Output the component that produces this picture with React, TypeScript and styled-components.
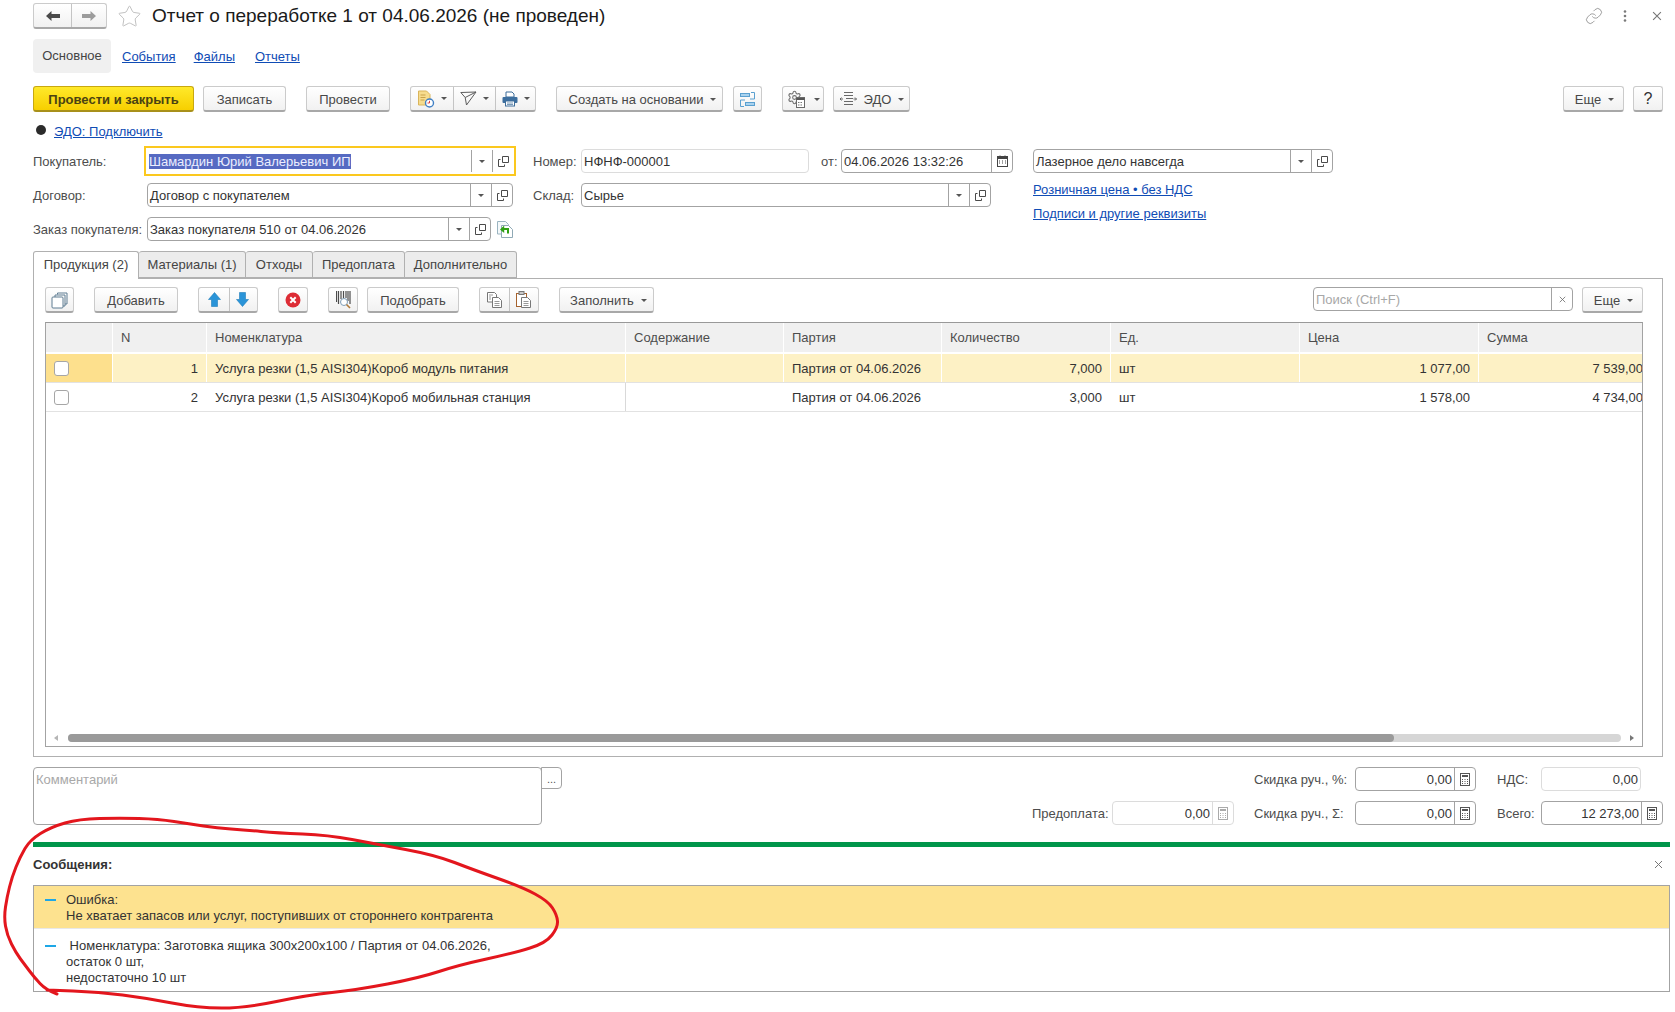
import React from "react";
import styled, { createGlobalStyle } from "styled-components";
import { Link as LinkIcon, Settings, Star as StarIcon } from "lucide-react";

const Global = createGlobalStyle`
  html, body { margin: 0; padding: 0; background: #fff; overflow: hidden; }
  body { font-family: "Liberation Sans", Arial, sans-serif; font-size: 13px; color: #333; }
`;

const Page = styled.div`
  position: relative;
  width: 1675px;
  height: 1012px;
  box-sizing: border-box;
  padding: 4px 5px 0 33px;
  overflow: hidden;
`;

const Content = styled.div`
  width: 1630px;
`;

const TitleBar = styled.header`
  display: flex;
  align-items: center;
  height: 24px;
`;

const Title = styled.h1`
  margin: 0 0 0 10px;
  font-size: 19px;
  font-weight: 400;
  color: #1a1a1a;
  white-space: nowrap;
`;

const WindowIcons = styled.div`
  margin-left: auto;
  display: flex;
  align-items: center;
  gap: 20px;
  color: #8a8a8a;
  transform: translateX(-1px);
`;

const CloseSlot = styled.span`
  margin-left: 5px;
  display: inline-flex;
`;

const Tabs = styled.nav`
  display: flex;
  align-items: center;
  height: 34px;
  margin-top: 11px;
`;

const ActiveSection = styled.div`
  width: 78px;
  height: 34px;
  line-height: 34px;
  text-align: center;
  background: #f0f0f0;
  border-radius: 4px;
  color: #444;
  margin-right: 11px;
`;

const A = styled.a<{ $ml?: number }>`
  color: #0f4cb5;
  text-decoration: underline;
  margin-left: ${(p) => p.$ml ?? 0}px;
  white-space: nowrap;
`;

const Toolbar = styled.div<{ $mt?: number }>`
  display: flex;
  align-items: flex-start;
  height: 26px;
  margin-top: ${(p) => p.$mt ?? 0}px;
`;

const Btn = styled.div<{ $w: number; $ml?: number; $primary?: boolean; $shift?: number }>`
  box-sizing: border-box;
  flex: none;
  display: flex;
  align-items: center;
  justify-content: center;
  gap: 7px;
  width: ${(p) => p.$w}px;
  height: 26px;
  padding: 1px 0 0 ${(p) => p.$shift ?? 0}px;
  margin-left: ${(p) => p.$ml ?? 0}px;
  border: 1px solid ${(p) => (p.$primary ? "#c8a810" : "#cbcbcb")};
  border-bottom: 2px solid ${(p) => (p.$primary ? "#a8901a" : "#a8a8a8")};
  border-radius: 3px;
  background: ${(p) =>
    p.$primary ? "linear-gradient(#ffe92a, #f7cf00)" : "linear-gradient(#ffffff, #f1f1f1)"};
  color: ${(p) => (p.$primary ? "#4a4212" : "#484848")};
  font-weight: ${(p) => (p.$primary ? 700 : 400)};
  white-space: nowrap;
`;

const HelpBtn = styled(Btn)`
  font-size: 16px;
  color: #333;
`;

const BtnGroup = styled(Btn)`
  gap: 0;
  padding: 0;
  align-items: stretch;
  justify-content: flex-start;
`;

const Segment = styled.div<{ $w: number }>`
  box-sizing: border-box;
  display: flex;
  align-items: center;
  justify-content: center;
  gap: 6px;
  width: ${(p) => p.$w}px;
  & + & {
    border-left: 1px solid #c4c4c4;
  }
`;

const Caret = styled.span`
  flex: none;
  width: 0;
  height: 0;
  border-left: 3px solid transparent;
  border-right: 3px solid transparent;
  border-top: 3px solid #555;
`;

const Push = styled.div`
  margin-left: auto;
`;

const EdoRow = styled.div`
  display: flex;
  align-items: center;
  height: 20px;
  margin-top: 9px;
  padding-left: 3px;
`;

const Bullet = styled.span`
  width: 10px;
  height: 10px;
  border-radius: 50%;
  background: #2b2b2b;
  margin-right: 8px;
  transform: translateY(-1px);
`;

const Form = styled.section`
  display: grid;
  grid-template-columns: 500px 500px auto;
  margin-top: 8px;
`;

const FormCol = styled.div`
  display: flex;
  flex-direction: column;
  gap: 10px;
`;

const FormRow = styled.div`
  display: flex;
  align-items: center;
  height: 24px;
`;

const Label = styled.span<{ $w?: number; $ml?: number }>`
  flex: none;
  box-sizing: border-box;
  width: ${(p) => (p.$w ? `${p.$w}px` : "auto")};
  margin-left: ${(p) => p.$ml ?? 0}px;
  color: #4d4d4d;
  white-space: nowrap;
`;

const Field = styled.div<{ $w: number; $h?: number; $muted?: boolean; $focus?: boolean }>`
  box-sizing: border-box;
  flex: none;
  display: flex;
  align-items: stretch;
  width: ${(p) => p.$w + (p.$focus ? 6 : 0)}px;
  height: ${(p) => (p.$h ?? 24) + (p.$focus ? 6 : 0)}px;
  margin: ${(p) => (p.$focus ? "-3px" : "0")};
  padding: ${(p) => (p.$focus ? "2px 1px" : "0")};
  border: ${(p) => (p.$focus ? "2px solid #fbc81e" : `1px solid ${p.$muted ? "#dcdcdc" : "#a3a3a3"}`)};
  border-radius: ${(p) => (p.$focus ? 0 : 4)}px;
  background: #fff;
`;

const Value = styled.div<{ $right?: boolean; $placeholder?: boolean }>`
  flex: 1;
  min-width: 0;
  padding: 0 ${(p) => (p.$right ? "2px" : "0")} 0 ${(p) => (p.$right ? "0" : "2px")};
  line-height: 23px;
  text-align: ${(p) => (p.$right ? "right" : "left")};
  color: ${(p) => (p.$placeholder ? "#a8a8a8" : "#333")};
  white-space: nowrap;
  overflow: hidden;
`;

const Selected = styled.span`
  background: #566ac2;
  color: #eceeff;
  display: inline-block;
  line-height: 15px;
`;

const Addon = styled.div<{ $muted?: boolean }>`
  flex: none;
  box-sizing: border-box;
  width: 21px;
  display: flex;
  align-items: center;
  justify-content: center;
  border-left: 1px solid ${(p) => (p.$muted ? "#dcdcdc" : "#a3a3a3")};
  color: #555;
  font-size: 12px;
`;

const GreenDocWrap = styled.span`
  margin-left: 6px;
  display: inline-flex;
`;

const LinkCol = styled.div`
  display: flex;
  flex-direction: column;
  gap: 8px;
  margin-top: -1px;
  line-height: 16px;
`;

const TabStrip = styled.div`
  display: flex;
  height: 27px;
  margin-top: 10px;
`;

const Tab = styled.div<{ $w: number; $active?: boolean }>`
  box-sizing: border-box;
  width: ${(p) => p.$w}px;
  height: ${(p) => (p.$active ? 28 : 27)}px;
  line-height: 26px;
  text-align: center;
  border: 1px solid #b0b0b0;
  border-bottom: ${(p) => (p.$active ? "none" : "1px solid #b0b0b0")};
  border-left-width: ${(p) => (p.$active ? 1 : 0)}px;
  border-radius: 3px 3px 0 0;
  background: ${(p) => (p.$active ? "#fff" : "#ececec")};
  color: #444;
  position: relative;
  z-index: ${(p) => (p.$active ? 1 : 0)};
`;

const Panel = styled.section`
  box-sizing: border-box;
  height: 479px;
  padding: 8px 19px 9px 11px;
  border: 1px solid #b0b0b0;
`;

const Table = styled.div`
  box-sizing: border-box;
  display: flex;
  flex-direction: column;
  height: 425px;
  margin-top: 9px;
  border: 1px solid #a3a3a3;
  border-top-color: #999;
  overflow: hidden;
`;

const Row = styled.div<{ $head?: boolean }>`
  flex: none;
  display: grid;
  grid-template-columns: 67px 94px 419px 158px 158px 169px 189px 179px 173px;
  height: ${(p) => (p.$head ? 31 : 29)}px;
  box-sizing: border-box;
  border-bottom: ${(p) => (p.$head ? "2px solid #fff" : "1px solid #e2e2e2")};
`;

const Cell = styled.div<{ $tone?: "head" | "current" | "marker"; $right?: boolean; $line?: string }>`
  box-sizing: border-box;
  display: flex;
  align-items: center;
  justify-content: ${(p) => (p.$right ? "flex-end" : "flex-start")};
  padding: 0 8px;
  background: ${(p) =>
    p.$tone === "head"
      ? "#f0f0f0"
      : p.$tone === "current"
        ? "#fdf1c5"
        : p.$tone === "marker"
          ? "#fde08d"
          : "transparent"};
  color: ${(p) => (p.$tone === "head" ? "#4d4d4d" : "#333")};
  border-right: 1px solid ${(p) => p.$line ?? "transparent"};
  white-space: nowrap;
`;

const Check = styled.span`
  box-sizing: border-box;
  width: 15px;
  height: 15px;
  background: #fff;
  border: 1px solid #a6a6a6;
  border-radius: 3px;
`;

const TableFill = styled.div`
  flex: 1;
`;

const Scroll = styled.div`
  flex: none;
  display: flex;
  align-items: center;
  height: 11px;
  margin-bottom: 3px;
  padding: 0 8px;
`;

const ScrollArrow = styled.span<{ $right?: boolean }>`
  flex: none;
  width: 0;
  height: 0;
  border-top: 3px solid transparent;
  border-bottom: 3px solid transparent;
  ${(p) => (p.$right ? "border-left: 4px solid #777;" : "border-right: 4px solid #b5b5b5;")}
`;

const Track = styled.div`
  flex: 1;
  height: 8px;
  margin: 0 9px 0 10px;
  border-radius: 4px;
  background: #d6d6d6;
`;

const Thumb = styled.div`
  height: 8px;
  border-radius: 4px;
  background: #9a9a9a;
`;

const Bottom = styled.section`
  display: flex;
  justify-content: space-between;
  margin-top: 10px;
  height: 59px;
`;

const CommentWrap = styled.div`
  display: flex;
  align-items: flex-start;
`;

const MoreBtn = styled.div`
  box-sizing: border-box;
  width: 21px;
  height: 22px;
  margin-left: -1px;
  border: 1px solid #a3a3a3;
  border-radius: 0 4px 4px 0;
  text-align: center;
  line-height: 22px;
  font-size: 11px;
  color: #555;
`;

const Totals = styled.div`
  display: grid;
  grid-template-columns: 80px 122px 121px 121px 65px 122px;
  grid-template-rows: 24px 24px;
  row-gap: 10px;
  align-items: center;
`;

const TotalLabel = styled(Label)<{ $col?: number; $pad?: number }>`
  grid-column: ${(p) => p.$col ?? "auto"};
  padding-left: ${(p) => p.$pad ?? 0}px;
`;

const GreenBar = styled.div`
  width: 1637px;
  height: 5px;
  margin-top: 16px;
  background: #00954a;
`;

const MessagesHead = styled.div`
  display: flex;
  align-items: center;
  justify-content: space-between;
  width: 1637px;
  height: 38px;
  box-sizing: border-box;
  padding: 0 7px 4px 0;
`;

const MessagesTitle = styled.strong`
  color: #333;
  font-size: 13px;
`;

const Messages = styled.div`
  box-sizing: border-box;
  width: 1637px;
  height: 107px;
  border: 1px solid #a3a3a3;
`;

const Message = styled.div<{ $current?: boolean }>`
  display: flex;
  box-sizing: border-box;
  height: ${(p) => (p.$current ? 43 : 61)}px;
  padding: ${(p) => (p.$current ? "6px" : "8px")} 0 0 11px;
  margin-bottom: ${(p) => (p.$current ? 1 : 0)}px;
  background: ${(p) => (p.$current ? "#fde28f" : "#fff")};
  line-height: 16px;
  color: #333;
  border-bottom: ${(p) => (p.$current ? "1px solid #e8e8e8" : "none")};
`;

const Dash = styled.span`
  flex: none;
  width: 11px;
  height: 2px;
  margin: 7px 10px 0 0;
  background: #1ea7e6;
`;

const MessageText = styled.div`
  white-space: pre;
`;

const Scribble = styled.svg`
  position: absolute;
  left: 0;
  top: 0;
  pointer-events: none;
`;

const Ico = styled.svg`
  flex: none;
  display: block;
`;

const Back = () => (
  <Ico width="16" height="12" viewBox="0 0 16 12">
    <path d="M1 6 6.500 1v3H15v4H6.500v3z" fill="#4a4a4a" />
  </Ico>
);
const Forward = () => (
  <Ico width="16" height="12" viewBox="0 0 16 12">
    <path d="M15 6 9.500 1v3H1v4h8.500v3z" fill="#9c9c9c" />
  </Ico>
);
const Dots = () => (
  <Ico width="4" height="14" viewBox="0 0 4 14">
    <circle cx="2" cy="2.500" r="1.300" fill="#7a7a7a" />
    <circle cx="2" cy="7" r="1.300" fill="#7a7a7a" />
    <circle cx="2" cy="11.500" r="1.300" fill="#7a7a7a" />
  </Ico>
);
const Cross = ({ s = 9, c = "#777" }: { s?: number; c?: string }) => (
  <Ico width={s} height={s} viewBox="0 0 9 9">
    <path d="M1 1l7 7M8 1 1 8" stroke={c} strokeWidth="1" fill="none" />
  </Ico>
);
const Open = () => (
  <Ico width="11" height="11" viewBox="0 0 11 11" fill="none" stroke="#4a4a4a">
    <path d="M4.500.5h6v6h-6z" />
    <path d="M2.500 3.500h-2v7h6v-2" />
  </Ico>
);
const Calc = ({ c = "#555" }: { c?: string }) => (
  <Ico width="10" height="13" viewBox="0 0 10 13" fill="none" stroke={c}>
    <rect x=".5" y=".5" width="9" height="12" />
    <path d="M2 3h6" strokeWidth="2" />
    <path d="M2 6.500h1M4.500 6.500h1M7 6.500h1M2 8.500h1M4.500 8.500h1M7 8.500h1M2 10.500h1M4.500 10.500h1M7 10.500h1" />
  </Ico>
);
const Cal = () => (
  <Ico width="11" height="12" viewBox="0 0 11 12" fill="none" stroke="#444">
    <rect x=".5" y="1.500" width="10" height="10" />
    <path d="M1 3h9" strokeWidth="2" />
    <path d="M3 .5v2M8 .5v2" />
    <path d="M2 6h1M5 6h1M8 6h1M2 8h1M5 8h1M8 8h1" />
  </Ico>
);
const DocClock = () => (
  <Ico width="18" height="18" viewBox="0 0 18 18">
    <path d="M1.500 1h8l3.500 3.500V15h-11.500z" fill="#f6dc8e" stroke="#d9b45a" />
    <path d="M3.500 5h5M3.500 7.500h5M3.500 10h4" stroke="#c9a24a" />
    <circle cx="12.500" cy="13" r="4" fill="#fff" stroke="#3f7fc4" strokeWidth="1.400" />
    <path d="M12.500 10.800V13h-2" stroke="#d94040" fill="none" />
  </Ico>
);
const Plane = () => (
  <Ico width="17" height="15" viewBox="0 0 17 15" fill="none" stroke="#5c5c5c">
    <path d="M.8 1.500 16 1 6.500 14 5.200 6.500z" />
    <path d="M5.200 6.500 16 1" />
  </Ico>
);
const Printer = () => (
  <Ico width="16" height="16" viewBox="0 0 16 16">
    <path d="M4 1h6l2 2v3H4z" fill="#fff" stroke="#3d6d9a" />
    <rect x=".5" y="6" width="15" height="6" rx="1" fill="#3c6e9e" />
    <rect x="3.500" y="10" width="9" height="5" fill="#fff" stroke="#3d6d9a" />
    <path d="M5 12h6M5 13.500h6" stroke="#3d6d9a" strokeWidth=".7" />
  </Ico>
);
const Structure = () => (
  <Ico width="15" height="17" viewBox="0 0 15 17">
    <rect x=".5" y="2.500" width="9" height="3" fill="#a9d2ee" stroke="#5aa0d0" />
    <rect x="5.500" y="11.500" width="9" height="3" fill="#a9d2ee" stroke="#5aa0d0" />
    <path d="M11 1.500h3.500v6.500H10M4 15.500H.5V9H5" fill="none" stroke="#5aa0d0" />
  </Ico>
);
const GearDoc = () => (
  <Ico width="20" height="18" viewBox="0 0 20 18">
    <Settings x={0} y={0} width={15} height={15} color="#707070" strokeWidth={1.700} />
    <rect x="9.500" y="7.500" width="8" height="10" fill="#fff" stroke="#6a6a6a" />
    <path d="M9.500 9h8" stroke="#555" strokeWidth="2" />
    <path d="M11 12.500h5M11 15h5" stroke="#777" strokeDasharray="1.500 1" />
  </Ico>
);
const EdoIcon = () => (
  <Ico width="18" height="16" viewBox="0 0 18 16" fill="none" stroke="#6a6a6a">
    <path d="M5 1.500h9M5 4.500h9M7 7.500h7M5 10.500h9M5 13.500h9" />
    <path d="M4 8H1M2.500 6.500 1 8l1.500 1.500" />
    <path d="M14.500 8h3M16 6.500 17.500 8 16 9.500" />
  </Ico>
);
const Stack = () => (
  <Ico width="17" height="17" viewBox="0 0 17 17" fill="none" stroke="#5f7d92">
    <path d="M6.500 2.500V1H16v11h-2" />
    <path d="M4 5V3h10v11h-2" />
    <rect x="1" y="5" width="11" height="11" rx="1" fill="#fff" />
  </Ico>
);
const Up = () => (
  <Ico width="13" height="15" viewBox="0 0 13 15">
    <path d="M6.500 .5 12.500 7.500H9.500V14.500H3.500V7.500H.5z" fill="#2a94d8" stroke="#1f7dbb" strokeWidth=".6" />
  </Ico>
);
const Down = () => (
  <Ico width="13" height="15" viewBox="0 0 13 15">
    <path d="M6.500 14.500 12.500 7.500H9.500V.5H3.500V7.500H.5z" fill="#2a94d8" stroke="#1f7dbb" strokeWidth=".6" />
  </Ico>
);
const Del = () => (
  <Ico width="16" height="16" viewBox="0 0 16 16">
    <circle cx="8" cy="8" r="7.500" fill="#dd2c35" />
    <path d="M5.300 5.300l5.400 5.400M10.700 5.300l-5.400 5.400" stroke="#fff" strokeWidth="2" />
  </Ico>
);
const Barcode = () => (
  <Ico width="15" height="18" viewBox="0 0 15 18">
    <path d="M.5 0v11M2.500 0v13M5 0v8M7.500 0v7M10 0v7M12 0v10M14 0v13" stroke="#4c4c4c" strokeWidth="1.200" />
    <circle cx="8" cy="11" r="3.500" fill="#fff" stroke="#7d9db8" />
    <path d="M10.500 13.500 14 17" stroke="#b07a3a" strokeWidth="1.600" />
  </Ico>
);
const Pages = () => (
  <Ico width="15" height="16" viewBox="0 0 15 16" fill="#fff" stroke="#777">
    <path d="M.5.500h7l2 2V10h-9z" />
    <path d="M5.500 5.500h6l3 3v7h-9z" />
    <path d="M7.500 9.500h5M7.500 11.500h5M7.500 13.500h5" stroke="#999" />
    <path d="M2 3h4M2 5h2M2 7h2" stroke="#999" />
  </Ico>
);
const Paste = () => (
  <Ico width="15" height="17" viewBox="0 0 15 17" fill="none">
    <rect x=".5" y="2.500" width="10" height="13" fill="#fff" stroke="#a5622e" />
    <rect x="3" y=".5" width="5" height="3" fill="#c9c9c9" stroke="#777" />
    <path d="M5.500 6.500h6l3 3v7h-9z" fill="#fff" stroke="#777" />
    <path d="M7.500 10.500h5M7.500 12.500h5M7.500 14.500h5" stroke="#999" />
  </Ico>
);
const GreenDoc = () => (
  <Ico width="16" height="17" viewBox="0 0 16 17">
    <path d="M.5.500h8l3 3V13H.5z" fill="#f4f8fa" stroke="#9ab4c0" />
    <path d="M4.500 4.500h7l4 4v8h-11z" fill="#fff" stroke="#8fa9b5" />
    <path d="M3 8.500 7.200 4.500v2.500H12v5.500H10V9H7.200v3z" fill="#2fa012" />
  </Ico>
);

const Dropdown = () => (
  <Addon>
    <Caret />
  </Addon>
);
const OpenAddon = ({ muted }: { muted?: boolean }) => (
  <Addon $muted={muted}>
    <Open />
  </Addon>
);

const points: [number, number][] = [
  [57, 994], [46, 990], [34, 977], [25, 965], [16, 953], [7, 935], [4, 917], [7, 897], [12, 877], [20, 857],
  [30, 840], [51, 827], [79, 819], [120, 818], [158, 819], [190, 824], [217, 828], [245, 830], [277, 833], [328, 835],
  [376, 844], [435, 855], [474, 870], [522, 887], [548, 901], [557, 915], [558, 927], [546, 943], [514, 953], [459, 965],
  [419, 978], [356, 990], [308, 995], [245, 1008], [198, 1008], [146, 998], [99, 992], [47, 990],
];

const smooth = (pts: [number, number][]) => {
  let d = `M${pts[0][0]} ${pts[0][1]}`;
  for (let i = 1; i < pts.length - 1; i++) {
    const mx = (pts[i][0] + pts[i + 1][0]) / 2;
    const my = (pts[i][1] + pts[i + 1][1]) / 2;
    d += ` Q${pts[i][0]} ${pts[i][1]} ${mx} ${my}`;
  }
  const last = pts[pts.length - 1];
  return `${d} L${last[0]} ${last[1]}`;
};

const rows = [
  { n: "1", name: "Услуга резки (1,5 AISI304)Короб модуль питания", qty: "7,000", price: "1 077,00", sum: "7 539,00", current: true },
  { n: "2", name: "Услуга резки (1,5 AISI304)Короб мобильная станция", qty: "3,000", price: "1 578,00", sum: "4 734,00", current: false },
];

const headers = ["", "N", "Номенклатура", "Содержание", "Партия", "Количество", "Ед.", "Цена", "Сумма"];

export default function App() {
  return (
    <Page>
      <Global />
      <Content>
        <TitleBar>
          <BtnGroup $w={74}>
            <Segment $w={37}><Back /></Segment>
            <Segment $w={35}><Forward /></Segment>
          </BtnGroup>
          <StarIcon size={25} strokeWidth={0.9} color="#bdbdbd" style={{ marginLeft: 10 }} />
          <Title>Отчет о переработке 1 от 04.06.2026 (не проведен)</Title>
          <WindowIcons>
            <LinkIcon size={18} strokeWidth={1.1} />
            <Dots />
            <CloseSlot><Cross s={10} /></CloseSlot>
          </WindowIcons>
        </TitleBar>

        <Tabs>
          <ActiveSection>Основное</ActiveSection>
          <A>События</A>
          <A $ml={18}>Файлы</A>
          <A $ml={20}>Отчеты</A>
        </Tabs>

        <Toolbar $mt={13}>
          <Btn $w={161} $primary>Провести и закрыть</Btn>
          <Btn $w={83} $ml={9}>Записать</Btn>
          <Btn $w={84} $ml={20}>Провести</Btn>
          <BtnGroup $w={126} $ml={20}>
            <Segment $w={42}><DocClock /><Caret /></Segment>
            <Segment $w={42}><Plane /><Caret /></Segment>
            <Segment $w={40}><Printer /><Caret /></Segment>
          </BtnGroup>
          <Btn $w={167} $ml={20} $shift={6}>Создать на основании<Caret /></Btn>
          <Btn $w={29} $ml={10}><Structure /></Btn>
          <Btn $w={42} $ml={20}><GearDoc /><Caret /></Btn>
          <Btn $w={77} $ml={9}><EdoIcon />ЭДО<Caret /></Btn>
          <Push />
          <Btn $w={61} $shift={2}>Еще<Caret /></Btn>
          <HelpBtn $w={30} $ml={9}>?</HelpBtn>
        </Toolbar>

        <EdoRow>
          <Bullet />
          <A>ЭДО: Подключить</A>
        </EdoRow>

        <Form>
          <FormCol>
            <FormRow>
              <Label $w={114}>Покупатель:</Label>
              <Field $w={366} $focus>
                <Value><Selected>Шамардин Юрий Валерьевич ИП</Selected></Value>
                <Dropdown />
                <OpenAddon />
              </Field>
            </FormRow>
            <FormRow>
              <Label $w={114}>Договор:</Label>
              <Field $w={366}>
                <Value>Договор с покупателем</Value>
                <Dropdown />
                <OpenAddon />
              </Field>
            </FormRow>
            <FormRow>
              <Label $w={114}>Заказ покупателя:</Label>
              <Field $w={344}>
                <Value>Заказ покупателя 510 от 04.06.2026</Value>
                <Dropdown />
                <OpenAddon />
              </Field>
              <GreenDocWrap><GreenDoc /></GreenDocWrap>
            </FormRow>
          </FormCol>
          <FormCol>
            <FormRow>
              <Label $w={48}>Номер:</Label>
              <Field $w={228} $muted><Value>НФНФ-000001</Value></Field>
              <Label $w={20} $ml={12}>от:</Label>
              <Field $w={172}>
                <Value>04.06.2026 13:32:26</Value>
                <Addon><Cal /></Addon>
              </Field>
            </FormRow>
            <FormRow>
              <Label $w={48}>Склад:</Label>
              <Field $w={410}>
                <Value>Сырье</Value>
                <Dropdown />
                <OpenAddon />
              </Field>
            </FormRow>
          </FormCol>
          <FormCol>
            <FormRow>
              <Field $w={300}>
                <Value>Лазерное дело навсегда</Value>
                <Dropdown />
                <OpenAddon />
              </Field>
            </FormRow>
            <LinkCol>
              <A>Розничная цена • без НДС</A>
              <A>Подписи и другие реквизиты</A>
            </LinkCol>
          </FormCol>
        </Form>

        <TabStrip>
          <Tab $w={106} $active>Продукция (2)</Tab>
          <Tab $w={107}>Материалы (1)</Tab>
          <Tab $w={67}>Отходы</Tab>
          <Tab $w={92}>Предоплата</Tab>
          <Tab $w={112}>Дополнительно</Tab>
        </TabStrip>

        <Panel>
          <Toolbar>
            <Btn $w={29}><Stack /></Btn>
            <Btn $w={84} $ml={20}>Добавить</Btn>
            <BtnGroup $w={60} $ml={20}>
              <Segment $w={30}><Up /></Segment>
              <Segment $w={26}><Down /></Segment>
            </BtnGroup>
            <Btn $w={30} $ml={20}><Del /></Btn>
            <Btn $w={30} $ml={20}><Barcode /></Btn>
            <Btn $w={92} $ml={9}>Подобрать</Btn>
            <BtnGroup $w={60} $ml={20}>
              <Segment $w={29}><Pages /></Segment>
              <Segment $w={28}><Paste /></Segment>
            </BtnGroup>
            <Btn $w={95} $ml={20} $shift={4}>Заполнить<Caret /></Btn>
            <Push />
            <Field $w={260}>
              <Value $placeholder>Поиск (Ctrl+F)</Value>
              <Addon><Cross s={7} c="#666" /></Addon>
            </Field>
            <Btn $w={61} $ml={9} $shift={2}>Еще<Caret /></Btn>
          </Toolbar>

          <Table>
            <Row $head>
              {headers.map((h, i) => (
                <Cell key={i} $tone="head" $line={i === 8 ? undefined : "#fff"}>{h}</Cell>
              ))}
            </Row>
            {rows.map((r) => {
              const tone = r.current ? ("current" as const) : undefined;
              const line = r.current ? "#fff" : undefined;
              return (
                <Row key={r.n}>
                  <Cell $tone={r.current ? "marker" : undefined} $line={line}><Check /></Cell>
                  <Cell $tone={tone} $right $line={line}>{r.n}</Cell>
                  <Cell $tone={tone} $line={r.current ? "#fff" : "#d9d9d9"}>{r.name}</Cell>
                  <Cell $tone={tone} $line={line} />
                  <Cell $tone={tone} $line={line}>Партия от 04.06.2026</Cell>
                  <Cell $tone={tone} $right $line={line}>{r.qty}</Cell>
                  <Cell $tone={tone} $line={line}>шт</Cell>
                  <Cell $tone={tone} $right $line={line}>{r.price}</Cell>
                  <Cell $tone={tone} $right>{r.sum}</Cell>
                </Row>
              );
            })}
            <TableFill />
            <Scroll>
              <ScrollArrow />
              <Track><Thumb style={{ width: `${(1324 / 1551) * 100}%` }} /></Track>
              <ScrollArrow $right />
            </Scroll>
          </Table>
        </Panel>

        <Bottom>
          <CommentWrap>
            <Field $w={509} $h={58}>
              <Value $placeholder>Комментарий</Value>
            </Field>
            <MoreBtn>...</MoreBtn>
          </CommentWrap>
          <Totals>
            <TotalLabel $col={3} $pad={20}>Скидка руч., %:</TotalLabel>
            <Field $w={121}>
              <Value $right>0,00</Value>
              <Addon><Calc /></Addon>
            </Field>
            <TotalLabel $pad={21}>НДС:</TotalLabel>
            <Field $w={100} $muted><Value $right>0,00</Value></Field>

            <TotalLabel>Предоплата:</TotalLabel>
            <Field $w={122} $muted>
              <Value $right>0,00</Value>
              <Addon $muted><Calc c="#aaa" /></Addon>
            </Field>
            <TotalLabel $pad={20}>Скидка руч., Σ:</TotalLabel>
            <Field $w={121}>
              <Value $right>0,00</Value>
              <Addon><Calc /></Addon>
            </Field>
            <TotalLabel $pad={21}>Всего:</TotalLabel>
            <Field $w={122}>
              <Value $right>12 273,00</Value>
              <Addon><Calc /></Addon>
            </Field>
          </Totals>
        </Bottom>
      </Content>

      <GreenBar />
      <MessagesHead>
        <MessagesTitle>Сообщения:</MessagesTitle>
        <Cross s={9} />
      </MessagesHead>
      <Messages>
        <Message $current>
          <Dash />
          <MessageText>{"Ошибка:\nНе хватает запасов или услуг, поступивших от стороннего контрагента"}</MessageText>
        </Message>
        <Message>
          <Dash />
          <MessageText>{" Номенклатура: Заготовка ящика 300x200x100 / Партия от 04.06.2026,\nостаток 0 шт,\nнедостаточно 10 шт"}</MessageText>
        </Message>
      </Messages>

      <Scribble width="1675" height="1012" viewBox="0 0 1675 1012">
        <path d={smooth(points)} fill="none" stroke="#e3161d" strokeWidth="3" strokeLinecap="round" />
      </Scribble>
    </Page>
  );
}
